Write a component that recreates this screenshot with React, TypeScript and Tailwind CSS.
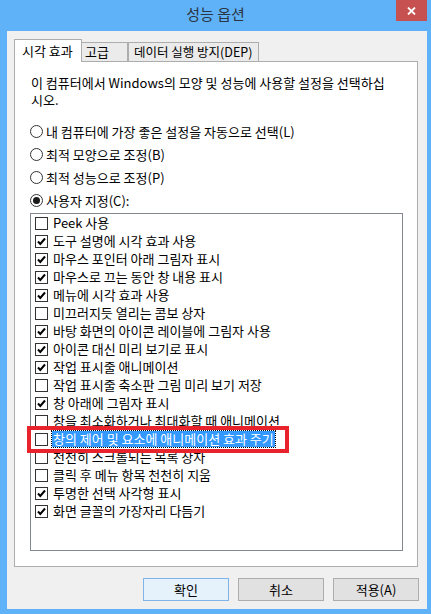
import React from "react";

const radios: [string, boolean][] = [
  ["내 컴퓨터에 가장 좋은 설정을 자동으로 선택(L)", false],
  ["최적 모양으로 조정(B)", false],
  ["최적 성능으로 조정(P)", false],
  ["사용자 지정(C):", true],
];

const items: [string, boolean][] = [
  ["Peek 사용", false],
  ["도구 설명에 시각 효과 사용", true],
  ["마우스 포인터 아래 그림자 표시", true],
  ["마우스로 끄는 동안 창 내용 표시", true],
  ["메뉴에 시각 효과 사용", true],
  ["미끄러지듯 열리는 콤보 상자", false],
  ["바탕 화면의 아이콘 레이블에 그림자 사용", true],
  ["아이콘 대신 미리 보기로 표시", true],
  ["작업 표시줄 애니메이션", true],
  ["작업 표시줄 축소판 그림 미리 보기 저장", false],
  ["창 아래에 그림자 표시", true],
  ["창을 최소화하거나 최대화할 때 애니메이션", false],
  ["창의 제어 및 요소에 애니메이션 효과 주기", false],
  ["천천히 스크롤되는 목록 상자", false],
  ["클릭 후 메뉴 항목 천천히 지움", false],
  ["투명한 선택 사각형 표시", true],
  ["화면 글꼴의 가장자리 다듬기", true],
];

const SELECTED = 12;

function Check({ on }: { on: boolean }) {
  return (
    <div className="w-[13px] h-[13px] shrink-0 border border-[#333] bg-white flex items-center justify-center">
      {on && (
        <svg width="11" height="11" viewBox="0 0 11 11">
          <path d="M2 5.5 L4.3 8 L9 2.5" fill="none" stroke="#000" strokeWidth="2" />
        </svg>
      )}
    </div>
  );
}

function Radio({ on }: { on: boolean }) {
  return (
    <div className="w-[13px] h-[13px] shrink-0 rounded-full border border-[#333] bg-white flex items-center justify-center">
      {on && <div className="w-[7px] h-[7px] rounded-full bg-[#1a1a1a]" />}
    </div>
  );
}

export default function App() {
  return (
    <div className="w-[431px] h-[614px] bg-[#60b2f8] flex flex-col font-['Noto_Sans_CJK_KR',sans-serif] text-[13px] text-black overflow-hidden">
      {/* title bar */}
      <div className="h-[31px] relative flex items-center justify-center shrink-0">
        <span className="text-[15px] text-[#2b3540] -mt-[2px]">성능 옵션</span>
        <div className="absolute top-0 right-[4px] w-[31px] h-[21px] bg-[#c75050] flex items-center justify-center">
          <svg width="9" height="8" viewBox="0 0 9 8">
            <path d="M1 0.5 L8 7.5 M8 0.5 L1 7.5" stroke="#fff" strokeWidth="1.8" />
          </svg>
        </div>
      </div>

      {/* client */}
      <div className="flex-1 ml-[7px] mr-[4px] mb-[5px] bg-[#f0f0f0] flex flex-col">
        {/* tabs */}
        <div className="h-[30px] pl-[7px] flex items-end shrink-0 whitespace-nowrap">
          <div className="relative z-10 -mb-px h-[23px] w-[68px] bg-white border border-b-0 border-[#adadad] flex items-center pl-[7px]">
            시각 효과
          </div>
          <div className="h-[19px] w-[46px] bg-[#ebebeb] border-t border-r border-[#adadad] flex items-center pl-[3px]">
            고급
          </div>
          <div className="h-[19px] w-[131px] bg-[#ebebeb] border border-b-0 border-[#adadad] flex items-center pl-[5px] text-[12.5px]">
            데이터 실행 방지(DEP)
          </div>
        </div>

        {/* panel */}
        <div className="ml-[7px] w-[404px] h-[506px] bg-white border border-[#adadad] pl-[15px] pr-[14px] pt-[12px] flex flex-col shrink-0">
          <div className="pl-px whitespace-nowrap">
            <div className="h-[17px] leading-[17px]">이 컴퓨터에서 Windows의 모양 및 성능에 사용할 설정을 선택하십</div>
            <div className="h-[17px] leading-[17px]">시오.</div>
          </div>

          <div className="mt-[12px] flex flex-col">
            {radios.map(([label, on]) => (
              <div key={label} className="h-[23px] flex items-center gap-[3px]">
                <Radio on={on} />
                <span>{label}</span>
              </div>
            ))}
          </div>

          <div className="relative mt-px h-[338px] border border-[#828790] bg-white pl-[4px]">
            {items.map(([label, on], i) => (
              <div key={label} className="h-[18px] flex items-center gap-[4px] whitespace-nowrap">
                <Check on={on} />
                {i === SELECTED ? (
                  <span className="bg-[#3399ff] text-white px-px leading-[16px] outline-1 outline-dotted outline-black">
                    {label}
                  </span>
                ) : (
                  <span className="pl-px">{label}</span>
                )}
              </div>
            ))}
            {/* red annotation box */}
            <div className="absolute left-[-4px] top-[212px] w-[262px] h-[27px] border-[4px] border-[#e8232b] pointer-events-none" />
          </div>
        </div>

        {/* buttons */}
        <div className="mt-[11px] flex justify-end gap-[9px] pr-[8px]">
          <div className="w-[86px] h-[23px] bg-[#e5f1fb] border border-[#7eb4ea] flex items-center justify-center">
            확인
          </div>
          <div className="w-[86px] h-[23px] bg-[#e1e1e1] border border-[#adadad] flex items-center justify-center">
            취소
          </div>
          <div className="w-[86px] h-[23px] bg-[#e1e1e1] border border-[#adadad] flex items-center justify-center">
            적용(A)
          </div>
        </div>
      </div>
    </div>
  );
}
